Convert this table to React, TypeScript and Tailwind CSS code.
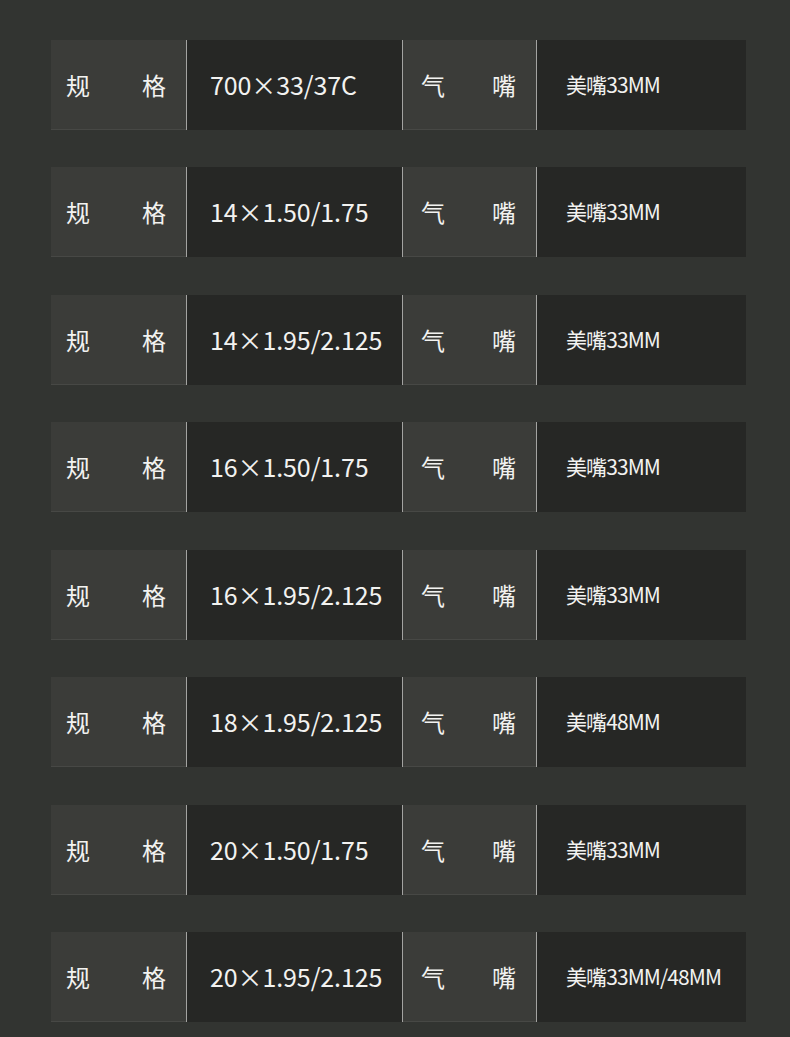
const rows = [
  { size: "700×33/37C", valve: "美嘴33MM" },
  { size: "14×1.50/1.75", valve: "美嘴33MM" },
  { size: "14×1.95/2.125", valve: "美嘴33MM" },
  { size: "16×1.50/1.75", valve: "美嘴33MM" },
  { size: "16×1.95/2.125", valve: "美嘴33MM" },
  { size: "18×1.95/2.125", valve: "美嘴48MM" },
  { size: "20×1.50/1.75", valve: "美嘴33MM" },
  { size: "20×1.95/2.125", valve: "美嘴33MM/48MM" },
];

const font = { fontFamily: '"Noto Sans CJK SC", "Noto Sans", sans-serif' };

function Divider() {
  return <div className="w-px bg-[#a3a3a1]" />;
}

export default function App() {
  return (
    <div
      className="w-[790px] h-[1037px] overflow-hidden bg-[#323431] pt-[40px] pl-[51px] text-[#f2f2f0]"
      style={font}
    >
      {rows.map((r, i) => (
        <div
          key={i}
          className={`flex h-[90px] w-[695px] ${i === 0 ? "" : i % 2 === 1 ? "mt-[37px]" : "mt-[38px]"}`}
        >
          {/* spec label */}
          <div className="w-[135px] flex items-center justify-between pl-[15px] pr-[20px] bg-[#3b3c39] border-b border-[#474845] text-[24px]">
            <span>规</span>
            <span>格</span>
          </div>
          <Divider />
          <div className="w-[215px] flex items-center pl-[23px] bg-[#262725] text-[25px] tracking-[-0.1px]">
            {r.size}
          </div>
          <Divider />
          {/* valve label */}
          <div className="w-[133px] flex items-center justify-between pl-[18px] pr-[20px] bg-[#3b3c39] border-b border-[#474845] text-[24px]">
            <span>气</span>
            <span>嘴</span>
          </div>
          <Divider />
          <div className="w-[209px] flex items-center pl-[29px] bg-[#262725] text-[21px] tracking-[-0.9px]">
            {r.valve}
          </div>
        </div>
      ))}
    </div>
  );
}
